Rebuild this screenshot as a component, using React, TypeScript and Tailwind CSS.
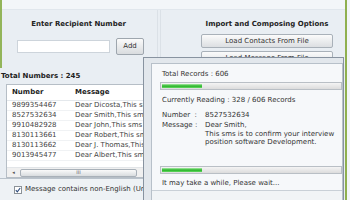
import React from "react";

const rows: [string, string][] = [
  ["9899354467", "Dear Dicosta,This sms is to confirm"],
  ["8527532634", "Dear Smith,This sms is to confirm"],
  ["9910482928", "Dear John,This sms is to confirm"],
  ["8130113661", "Dear Robert,This sms is to confirm"],
  ["8130113662", "Dear J. Thomas,This sms is to confirm"],
  ["9013945477", "Dear Albert,This sms is to confirm"],
];

function Bar({ fill }: { fill: number }) {
  return (
    <div className="h-[8px] w-[182px] border border-[#b9bfc5] bg-linear-to-b from-[#f4f4f4] to-[#dcdcdc] p-[1px]">
      <div
        className="h-full bg-linear-to-b from-[#a6eea6] via-[#1eb21e] to-[#62d862]"
        style={{ width: fill }}
      />
    </div>
  );
}

export default function App() {
  return (
    <div className="relative flex h-[200px] w-[350px] overflow-hidden bg-[#e9eef3] font-['DejaVu_Sans',sans-serif] text-[7px] leading-[9px] text-[#333]">
      <div className="flex w-[345px] shrink-0 flex-col">
        <div className="h-[10px] border-b border-[#e1e7ed] bg-[#f3f6f9]" />
        <div className="flex flex-1">
          {/* left panel */}
          <div className="flex w-[158px] shrink-0 flex-col border-r border-[#dbe1e7]">
            <div className="mt-[10px] text-center font-bold text-[#222]">Enter Recipient Number</div>
            <div className="mt-[9px] flex h-[17px] items-center">
              <div className="ml-[17px] h-[13px] w-[93px] shrink-0 border border-[#cdd4db] bg-white" />
              <div className="ml-[6px] flex h-[17px] w-[28px] shrink-0 items-center justify-center rounded-[2px] border border-[#9ea6ae] bg-linear-to-b from-[#fbfbfb] to-[#d9dcdf] text-[#333]">
                Add
              </div>
            </div>
            <div className="mt-[16px] pl-[1px] font-bold leading-[10px] text-[#222]">Total Numbers : 245</div>
            <div className="ml-[6px] mt-[3px] flex h-[94px] w-[148px] flex-col overflow-hidden border border-[#b6bec6] bg-white">
              <div className="flex h-[16px] shrink-0 items-center border-b border-[#e4e8ec] font-bold text-[#222]">
                <div className="w-[68px] shrink-0 pl-[5px]">Number</div>
                <div className="shrink-0">Message</div>
              </div>
              {rows.map(([n, m]) => (
                <div key={n} className="flex h-[10px] shrink-0 items-center whitespace-nowrap border-b border-[#f0f2f4] text-[#444]">
                  <div className="w-[68px] shrink-0 pl-[5px]">{n}</div>
                  <div className="shrink-0">{m}</div>
                </div>
              ))}
              <div className="mt-auto flex h-[10px] shrink-0 items-center border-t border-[#e2e5e8] bg-[#f0f0f0]">
                <div className="flex w-[13px] shrink-0 items-center justify-center text-[5px] text-[#555]">◂</div>
                <div className="flex h-[8px] w-[117px] shrink-0 items-center justify-center rounded-[2px] border border-[#a9b1b9] bg-linear-to-b from-[#fafafa] to-[#d8dcdf] text-[5px] leading-[5px] text-[#666]">
                  III
                </div>
              </div>
            </div>
            <div className="flex flex-1 items-center border-t border-[#b9c2cb] bg-[#eef2f5] pl-[14px]">
              <div className="flex h-[8px] w-[8px] shrink-0 items-center justify-center border border-[#8b9298] bg-white">
                <svg width="6" height="6" viewBox="0 0 6 6">
                  <path d="M0.8 3.2 L2.3 4.8 L5.2 1" stroke="#2b4a7a" strokeWidth="1.1" fill="none" />
                </svg>
              </div>
              <div className="ml-[3px] shrink-0 whitespace-nowrap">Message contains non-English (Unicode) characters</div>
            </div>
          </div>
          {/* right panel */}
          <div className="ml-[2px] flex flex-1 flex-col border-l border-[#dbe1e7]">
            <div className="ml-[40px] flex w-[132px] flex-col">
              <div className="mt-[10px] whitespace-nowrap text-center font-bold text-[#222]">Import and Composing Options</div>
              <div className="mt-[5px] flex h-[14px] items-center justify-center rounded-[2px] border border-[#a9b1b9] bg-linear-to-b from-[#fbfbfb] to-[#dcdfe2]">
                Load Contacts From File
              </div>
              <div className="mt-[3px] flex h-[14px] items-center justify-center rounded-[2px] border border-[#a9b1b9] bg-linear-to-b from-[#fbfbfb] to-[#dcdfe2]">
                Load Message From File
              </div>
            </div>
          </div>
        </div>
      </div>
      <div className="w-[2px] shrink-0 bg-[#8fb04f]" />
      <div className="flex-1 bg-[#f2f5f8]" />

      {/* left window edge */}
      <div className="absolute left-0 top-0 h-[68px] w-[2px] bg-[#93b55a]" />

      {/* progress dialog */}
      <div className="absolute left-[143px] top-[57px] h-[150px] w-[201px] border border-[#8893a0] bg-[#e2e7ec] pl-[7px] pt-[5px]">
        <div className="flex h-[140px] flex-col border border-[#b7c0c9] bg-[#f6f8fa] pl-[8px]">
          <div className="ml-[2px] mt-[5px] leading-[10px]">Total Records : 606</div>
          <div className="mt-[3px]">
            <Bar fill={40} />
          </div>
          <div className="ml-[2px] mt-[5px] leading-[10px]">Currently Reading : 328 / 606 Records</div>
          <div className="ml-[2px] mt-[5px] flex leading-[10px]">
            <div className="w-[43px] shrink-0 whitespace-pre">Number  :</div>
            <div className="shrink-0">8527532634</div>
          </div>
          <div className="ml-[2px] mt-[1px] flex leading-[8.5px]">
            <div className="w-[43px] shrink-0 whitespace-pre">Message :</div>
            <div className="shrink-0">
              <div>Dear Smith,</div>
              <div>This sms is to confirm your interview</div>
              <div>position software Development.</div>
            </div>
          </div>
          <div className="mt-[19px]">
            <Bar fill={40} />
          </div>
          <div className="ml-[2px] mt-[4px] leading-[10px]">It may take a while, Please wait...</div>
          <div className="-ml-[8px] mt-[2px] flex-1 border-t border-[#c9d0d7] bg-[#f1f4f6]" />
        </div>
      </div>
    </div>
  );
}
